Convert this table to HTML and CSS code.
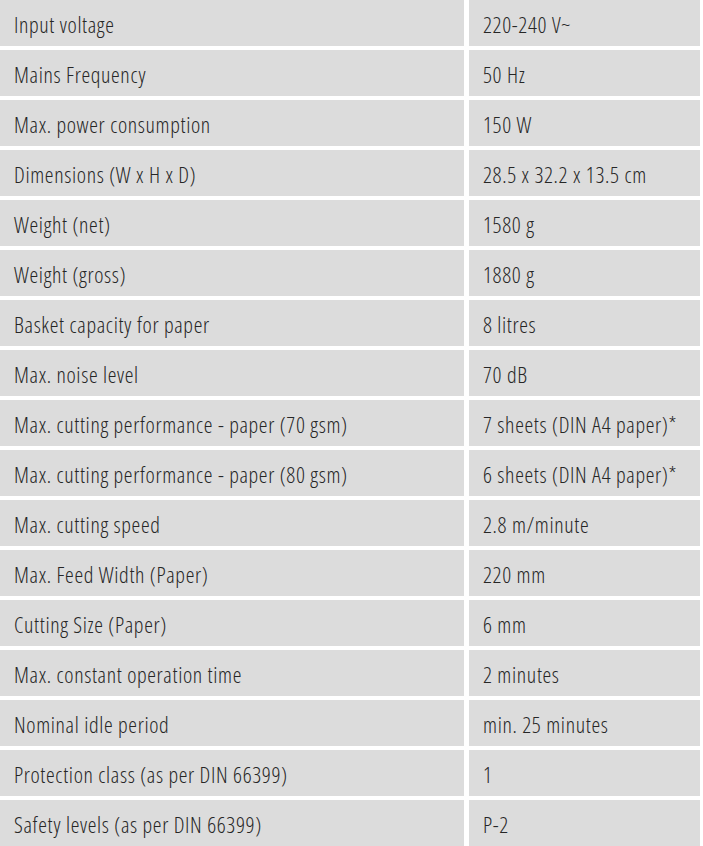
FILE: index.html
```html
<!DOCTYPE html>
<html lang="en">
<head>
<meta charset="utf-8">
<title>Specifications</title>
<link rel="stylesheet" href="styles.css">
</head>
<body>
<div class="specs">
  <div class="cell">Input voltage</div><div class="cell">220-240 V~</div>
  <div class="cell">Mains Frequency</div><div class="cell">50 Hz</div>
  <div class="cell">Max. power consumption</div><div class="cell">150 W</div>
  <div class="cell">Dimensions (W x H x D)</div><div class="cell">28.5 x 32.2 x 13.5 cm</div>
  <div class="cell">Weight (net)</div><div class="cell">1580 g</div>
  <div class="cell">Weight (gross)</div><div class="cell">1880 g</div>
  <div class="cell">Basket capacity for paper</div><div class="cell">8 litres</div>
  <div class="cell">Max. noise level</div><div class="cell">70 dB</div>
  <div class="cell">Max. cutting performance - paper (70 gsm)</div><div class="cell">7 sheets (DIN A4 paper)*</div>
  <div class="cell">Max. cutting performance - paper (80 gsm)</div><div class="cell">6 sheets (DIN A4 paper)*</div>
  <div class="cell">Max. cutting speed</div><div class="cell">2.8 m/minute</div>
  <div class="cell">Max. Feed Width (Paper)</div><div class="cell">220 mm</div>
  <div class="cell">Cutting Size (Paper)</div><div class="cell">6 mm</div>
  <div class="cell">Max. constant operation time</div><div class="cell">2 minutes</div>
  <div class="cell">Nominal idle period</div><div class="cell">min. 25 minutes</div>
  <div class="cell">Protection class (as per DIN 66399)</div><div class="cell">1</div>
  <div class="cell">Safety levels (as per DIN 66399)</div><div class="cell">P-2</div>
</div>
</body>
</html>
```
FILE: styles.css
```css
html, body {
  margin: 0;
  padding: 0;
  background: #ffffff;
}
.specs {
  display: grid;
  grid-template-columns: 464px 231px;
  grid-auto-rows: 46px;
  column-gap: 5px;
  row-gap: 4px;
  font-family: "Open Sans", sans-serif;
  font-stretch: 75%;
  font-weight: 300;
  font-size: 22px;
  letter-spacing: 0.65px;
  color: #262626;
}
.cell {
  background: #dcdcdc;
  display: flex;
  align-items: center;
  padding-left: 14px;
  padding-top: 2px;
  box-sizing: border-box;
  white-space: nowrap;
}
```
